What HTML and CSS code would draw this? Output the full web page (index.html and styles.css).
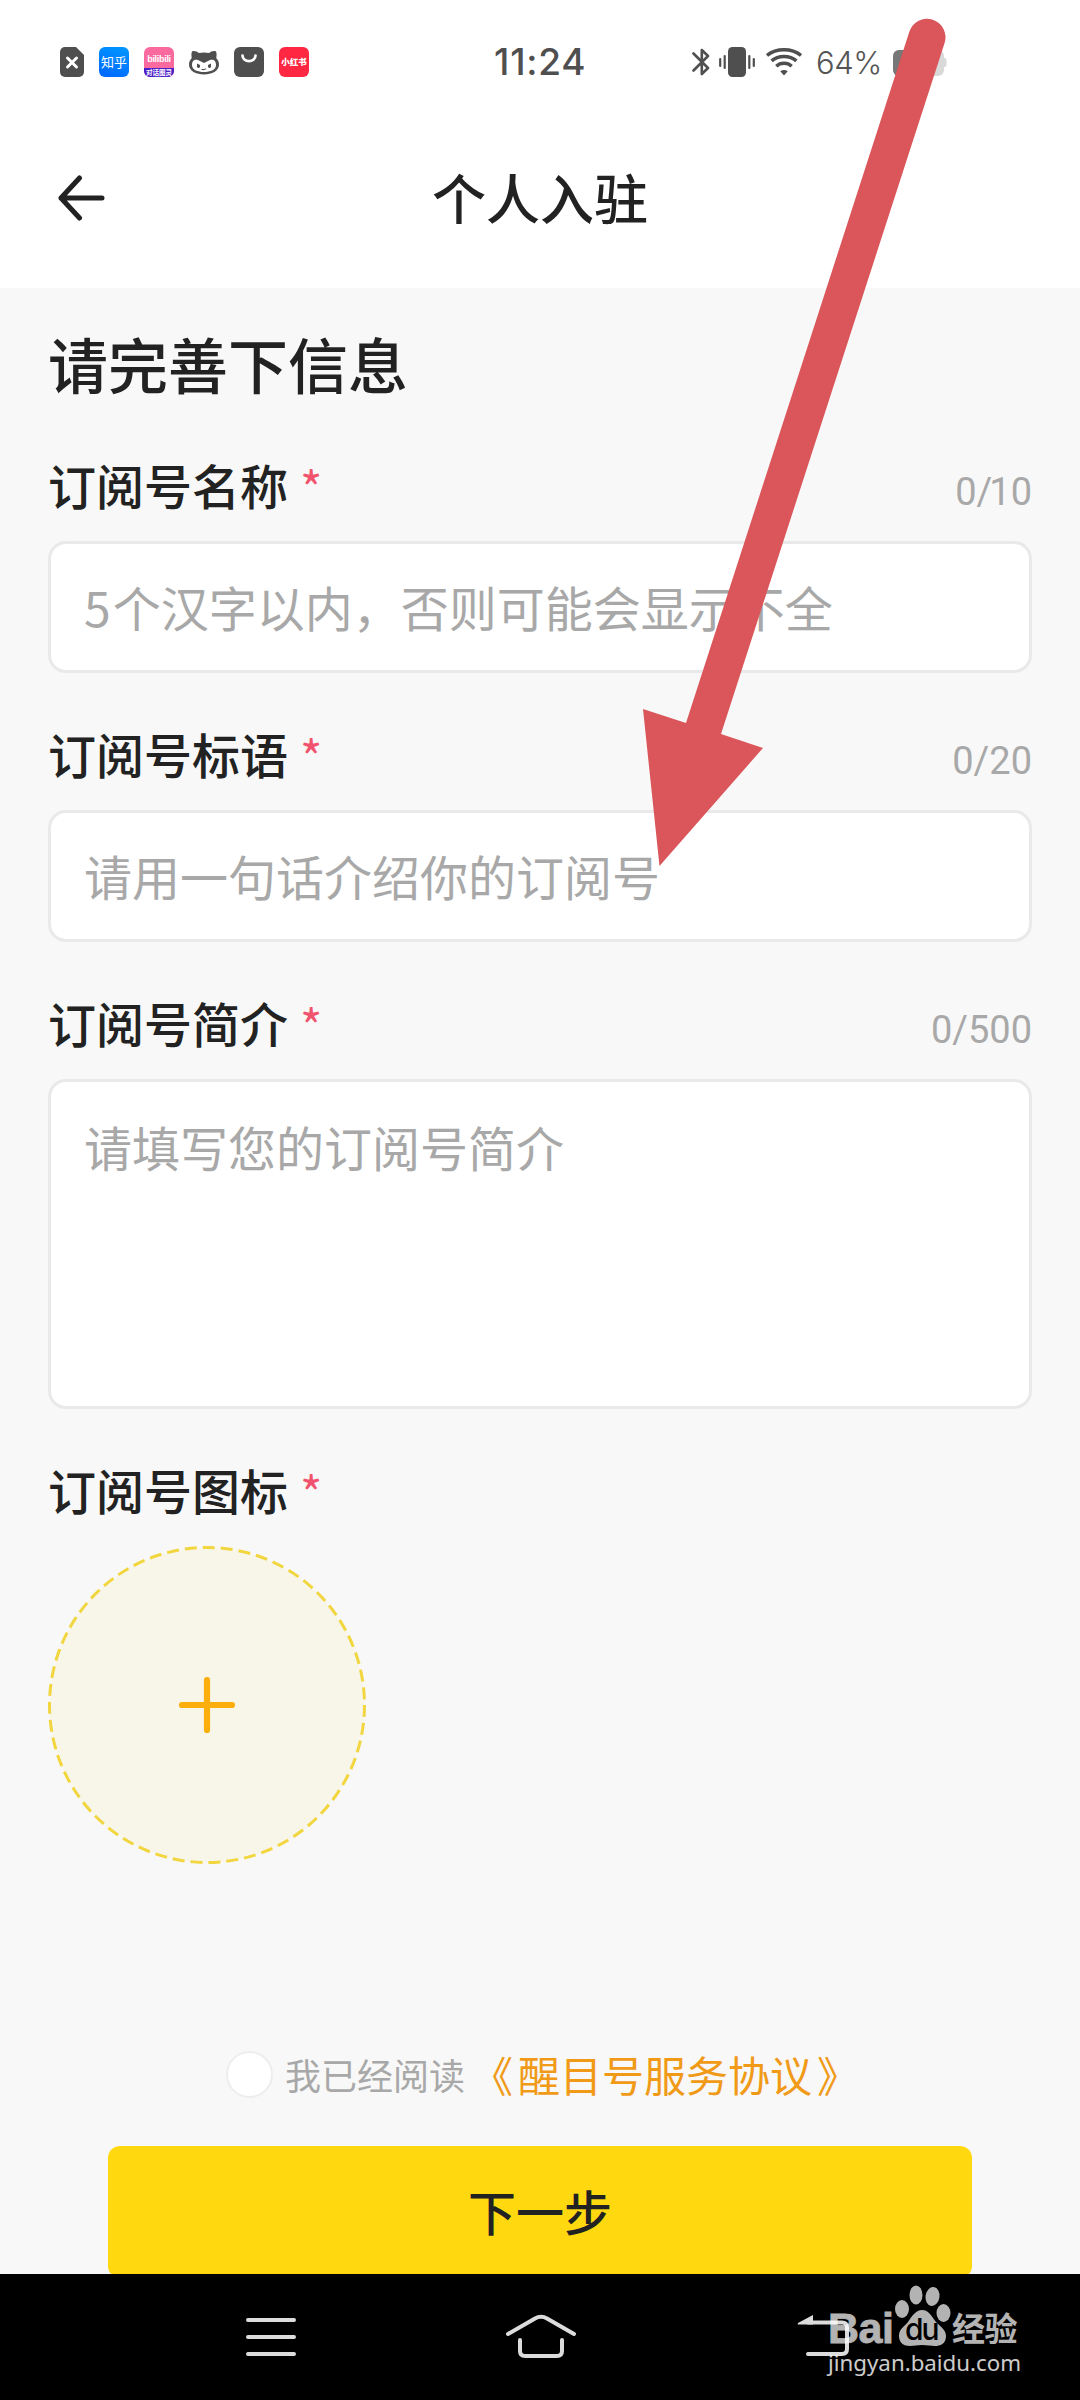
FILE: index.html
```html
<!DOCTYPE html>
<html lang="zh-CN">
<head>
<meta charset="utf-8">
<title>个人入驻</title>
<link rel="stylesheet" href="styles.css">
</head>
<body>
<div class="screen">
  <header class="statusbar">
    <div class="notifications">
      <svg class="note-file" viewBox="0 0 24 30"><path d="M5 0H16L24 8V25a5 5 0 0 1-5 5H5a5 5 0 0 1-5-5V5a5 5 0 0 1 5-5Z" fill="#4f4f4f"/><path d="M7.500 11 16.500 20M16.500 11 7.500 20" stroke="#fff" stroke-width="3" stroke-linecap="round"/></svg>
      <span class="app app-zhihu">知乎</span>
      <span class="app app-bili"><span class="bili-top">bilibili</span><span class="bili-bottom">对话图灵</span></span>
      <svg class="note-icon" viewBox="0 0 30 30"><path d="M3 4.500C5 3.500 8 4.500 10 6q5-1.200 10 0c2-1.500 5-2.500 7-1.500 .8 2 .7 4.500 .2 6.500C29 13 30 15 30 17.500 30 24 23 27.500 15 27.500S0 24 0 17.500C0 15 1 13 2.800 11 2.300 9 2.200 6.500 3 4.500Z" fill="#4f4f4f"/><path d="M3 18c0-5 3-6 6-5l6 3 6-3c3-1 6 0 6 5 0 5-6 7-12 7s-12-2-12-7Z" fill="#fff"/><path d="M8 16.500l3 1.500v2q-1.500 1.800-3 0ZM22 16.500l-3 1.500v2q1.500 1.800 3 0Z" fill="#4f4f4f"/><path d="M12.500 22.200q2.500 1 4.500-.6" fill="none" stroke="#4f4f4f" stroke-width="1.200"/></svg>
      <svg class="note-icon" viewBox="0 0 30 30"><rect width="30" height="30" rx="6" fill="#4f4f4f"/><path d="M8.500 8.500a6.500 5.700 0 0 0 13 0" fill="none" stroke="#fff" stroke-width="2.700" stroke-linecap="round"/></svg>
      <span class="app app-red">小红书</span>
    </div>
    <div class="clock">11:24</div>
    <div class="system">
      <svg class="bt" viewBox="0 0 18 30"><path d="M1.500 6.500 16 21 9.800 27V3L16 9 1.500 23.500" fill="none" stroke="#4f4f4f" stroke-width="2.600" stroke-linejoin="round" stroke-linecap="round"/></svg>
      <svg class="vib" viewBox="0 0 36 30"><rect x="9" width="18" height="30" rx="4.500" fill="#4f4f4f"/><path d="M1.200 12v7M5.700 9v12M30.300 9v12M34.800 12v7" stroke="#4f4f4f" stroke-width="2.200" stroke-linecap="round"/></svg>
      <svg class="wifi" viewBox="0 0 36 28"><g fill="none" stroke="#4f4f4f" stroke-width="3.500"><path d="M1 7.400Q8 1.800 18 1.800T35 7.400"/><path d="M5.600 12.900Q10.500 8.600 18 8.600T30.400 12.900"/><path d="M10.300 18.200Q13.500 15.300 18 15.300T25.700 18.200"/></g><path d="M14.300 23.200q3.700-2.600 7.400 0L18 27.500Z" fill="#4f4f4f"/></svg>
      <span class="percent">64%</span>
      <svg class="battery" viewBox="0 0 54 26"><rect width="51" height="26" rx="6" fill="#d9d9d9"/><path d="M6 0H32V26H6a6 6 0 0 1-6-6V6a6 6 0 0 1 6-6Z" fill="#777"/><path d="M50 8h1.500a2 2 0 0 1 2 2v5a2 2 0 0 1-2 2H50Z" fill="#d9d9d9"/></svg>
    </div>
  </header>

  <nav class="titlebar">
    <svg class="back" viewBox="0 0 48 46"><path d="M21.500 3 3 23 21.500 43M3 23H44" fill="none" stroke="#222" stroke-width="5" stroke-linecap="round" stroke-linejoin="round"/></svg>
    <h1 class="title">个人入驻</h1>
  </nav>

  <main class="form">
    <h2 class="heading">请完善下信息</h2>
    <section class="field">
      <div class="label-row"><span class="label">订阅号名称</span><span class="star">*</span><span class="count">0/<span class="one">1</span>0</span></div>
      <div class="input"><span class="digit">5</span>个汉字以内，否则可能会显示不全</div>
    </section>
    <section class="field">
      <div class="label-row"><span class="label">订阅号标语</span><span class="star">*</span><span class="count">0/20</span></div>
      <div class="input">请用一句话介绍你的订阅号</div>
    </section>
    <section class="field">
      <div class="label-row"><span class="label">订阅号简介</span><span class="star">*</span><span class="count">0/500</span></div>
      <div class="input input-tall">请填写您的订阅号简介</div>
    </section>
    <section class="field">
      <div class="label-row"><span class="label">订阅号图标</span><span class="star">*</span></div>
      <svg class="upload" viewBox="0 0 318 318"><circle cx="159" cy="159" r="157.500" fill="#f8f5e9" stroke="#f1d640" stroke-width="3" stroke-dasharray="12 5.991"/><path d="M159 134V184M134 159H184" stroke="#fbae0c" stroke-width="6.200" stroke-linecap="round"/></svg>
    </section>
    <div class="agreement"><span class="radio"></span><span class="read">我已经阅读</span><span class="link"><span class="open">《</span>醒目号服务协议<span class="close">》</span></span></div>
    <div class="next">下一步</div>
  </main>

  <footer class="navbar">
    <svg class="nav-icon" viewBox="0 0 80 60"><path d="M17 13H63M17 30H63M17 47H63" stroke="#dcdcdc" stroke-width="4" stroke-linecap="round"/></svg>
    <svg class="nav-icon" viewBox="0 0 80 60"><path d="M7 27 34 11.500Q40 8 46 11.500L73 27M19 33V44Q19 49 24 49H56Q61 49 61 44V33" fill="none" stroke="#dcdcdc" stroke-width="4" stroke-linecap="round"/></svg>
    <svg class="nav-icon" viewBox="0 0 80 60"><path d="M38 15.500H72Q77 15.500 77 20.500V42Q77 47 72 47H38" fill="none" stroke="#dcdcdc" stroke-width="4" stroke-linecap="round"/><path d="M28 16 43 8V17.500H29Q27 17.500 28 16Z" fill="#dcdcdc"/></svg>
  </footer>

  <svg class="arrow" viewBox="0 0 1080 900"><path d="M909.400 31.500A18.500 18.500 0 0 1 944.600 43L721 734 763 748 659.500 866 643 709 686 723Z" fill="#da565a"/></svg>

  <div class="watermark">
    <div class="brand">
      <span class="bai">Bai</span>
      <span class="paw">
        <svg class="paw-shape" viewBox="0 0 56 62"><g fill="#fff"><ellipse cx="7" cy="24" rx="7" ry="9"/><ellipse cx="21" cy="10" rx="6.500" ry="9.500"/><ellipse cx="37.500" cy="11.500" rx="7" ry="9.500" transform="rotate(8 37.500 11.500)"/><ellipse cx="48.500" cy="28" rx="7" ry="9"/><path d="M27 25c7 0 9 6 14 12 5 5 10 8 10 14 0 8-6 10-11 10-4 0-8-1-13-1s-8 1-12 1C9 61 4 58 4 51c0-7 5-9 9-14 4-6 8-12 14-12Z"/></g></svg>
        <span class="du">du</span>
      </span>
      <span class="jy">经验</span>
    </div>
    <div class="site">jingyan.baidu.com</div>
  </div>
</div>
</body>
</html>
```
FILE: styles.css
```css
* { box-sizing: border-box; }
body {
  margin: 0;
  background: #f8f8f8;
  font-family: "Noto Sans CJK SC", sans-serif;
  color: #222;
}
.screen {
  position: relative;
  width: 1080px;
  height: 2400px;
  overflow: hidden;
  display: flex;
  flex-direction: column;
}
svg { display: block; flex: none; }

.statusbar {
  height: 124px;
  flex: none;
  padding: 0 133px 0 60px;
  background: #fff;
  display: grid;
  grid-template-columns: 434px 1fr auto;
  align-items: center;
}
.notifications { display: flex; gap: 15px; }
.note-file { width: 24px; height: 30px; }
.note-icon { width: 30px; height: 30px; }
.app {
  width: 30px;
  height: 30px;
  border-radius: 6px;
  overflow: hidden;
  color: #fff;
  text-align: center;
  white-space: nowrap;
  flex: none;
}
.app-zhihu { background: linear-gradient(20deg, #0066ff, #0098ff); font-size: 13px; line-height: 29px; font-weight: 400; }
.app-bili { background: #fb6a9f; display: flex; flex-direction: column; }
.bili-top { height: 21px; font: 700 9px/24px "Liberation Sans", sans-serif; letter-spacing: -0.3px; }
.bili-bottom { height: 9px; background: #4a1fc8; font-size: 6.500px; line-height: 8px; font-weight: 700; }
.app-red { background: #ff2742; font-size: 8.500px; line-height: 29px; font-weight: 900; }
.clock {
  font: 500 37px/44px Inter, sans-serif;
  color: #4f4f4f;
  letter-spacing: 0.8px;
}
.system { display: flex; align-items: center; }
.bt { width: 18px; height: 30px; }
.vib { width: 36px; height: 30px; margin-left: 9px; }
.wifi { width: 36px; height: 28px; margin-left: 11px; }
.percent { font: 300 31px/40px Inter, sans-serif; color: #555; width: 64px; margin: 2px 13px 0 14px; white-space: nowrap; letter-spacing: -0.5px; }
.battery { width: 54px; height: 26px; margin-top: 1px; }

.titlebar {
  height: 164px;
  flex: none;
  padding: 0 58px;
  background: #fff;
  display: grid;
  grid-template-columns: 48px 1fr 48px;
  align-items: start;
}
.back { width: 48px; height: 46px; margin-top: 51px; }
.title {
  margin: 43px 0 0;
  font-size: 54px;
  line-height: 60px;
  font-weight: 500;
  text-align: center;
}

.form {
  height: 1986px;
  flex: none;
  padding: 45px 48px 0;
  background: #f8f8f8;
  display: flex;
  flex-direction: column;
}
.heading {
  margin: 0 0 67px;
  font-size: 60px;
  line-height: 60px;
  font-weight: 500;
}
.field { margin-bottom: 56px; }
.label-row {
  display: flex;
  align-items: center;
  height: 48px;
  margin-bottom: 33px;
}
.label { font-size: 48px; line-height: 46px; font-weight: 500; }
.star { margin: 3px 0 0 12px; font-size: 48px; line-height: 46px; color: #f1536e; font-weight: 400; }
.count {
  margin: 16px 0 0 auto;
  font: 400 38px/38px Roboto, sans-serif;
  color: #a8a8a8;
}
.one { margin-left: -3px; }
.input {
  height: 132px;
  padding: 0 33px;
  border: 3px solid #e9e9e9;
  border-radius: 18px;
  background: #fff;
  color: #a8a8a8;
  font-size: 48px;
  line-height: 124px;
  white-space: nowrap;
}
.digit { letter-spacing: 2px; }
.input-tall { height: 330px; padding-top: 34px; line-height: 60px; }
.upload { width: 318px; height: 318px; }
.agreement {
  height: 48px;
  margin-top: 130px;
  padding-left: 178px;
  display: flex;
  align-items: center;
}
.radio { width: 47px; height: 47px; border: 2px solid #ededed; border-radius: 50%; background: #fff; }
.read { margin-left: 12px; font-size: 36px; line-height: 48px; color: #a8a8a8; }
.link { margin-left: 6px; font-size: 42px; line-height: 46px; color: #f09a18; }
.open { letter-spacing: 5px; }
.close { margin-left: 5px; }
.next {
  height: 132px;
  flex: none;
  margin: 48px 60px 0;
  border-radius: 12px;
  background: #ffd80f;
  font-size: 48px;
  line-height: 129px;
  font-weight: 500;
  text-align: center;
}

.navbar {
  position: relative;
  height: 126px;
  flex: none;
  padding: 33px 230px 0 231px;
  background: #000;
  display: flex;
  justify-content: space-between;
}
.nav-icon { width: 80px; height: 60px; }

.arrow {
  position: absolute;
  left: 0;
  top: 0;
  width: 1080px;
  height: 900px;
}
.watermark {
  position: absolute;
  left: 828px;
  top: 2285px;
  width: 194px;
  color: #fff;
}
.brand { display: flex; height: 62px; opacity: 0.7; }
.bai { width: 67px; padding-top: 23px; font: 700 43px/41px "Liberation Sans", sans-serif; letter-spacing: -0.5px; -webkit-text-stroke: 0.8px #fff; }
.paw { position: relative; width: 56px; }
.paw-shape { width: 56px; height: 62px; }
.du { position: absolute; left: 10px; top: 29px; font: 500 30px/31px Inter, sans-serif; color: #000; letter-spacing: -2px; }
.jy { margin-left: 1px; font-size: 33px; line-height: 33px; padding-top: 26px; font-weight: 700; letter-spacing: -0.5px; white-space: nowrap; }
.site { margin-top: 2px; font: 400 22.300px/28px "Noto Sans", sans-serif; opacity: 0.8; white-space: nowrap; }
```
